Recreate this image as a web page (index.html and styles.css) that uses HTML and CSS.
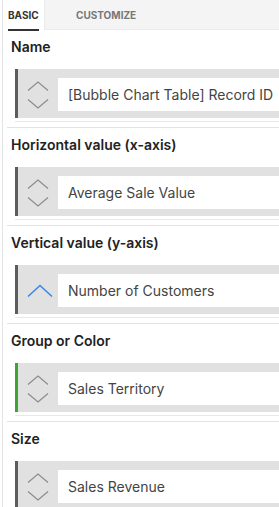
FILE: index.html
```html
<!DOCTYPE html>
<html>
<head>
  <title>Bubble chart fields</title>
  <link rel="stylesheet" href="styles.css">
</head>
<body>
  <div class="panel">
    <div class="tabs">
      <div class="tab active"><span>Basic</span></div>
      <div class="tab"><span>Customize</span></div>
    </div>

    <div class="section">
      <h4>Name</h4>
      <div class="field-wrap">
        <div class="field">
          <div class="sort">
            <svg width="22" height="28" viewBox="0 0 22 28"><polyline points="1,9.5 11,1 21,9.5"/><polyline points="1,18.5 11,27 21,18.5"/></svg>
          </div>
          <div class="value">[Bubble Chart Table] Record ID</div>
        </div>
      </div>
    </div>

    <div class="section">
      <h4>Horizontal value (x-axis)</h4>
      <div class="field-wrap">
        <div class="field">
          <div class="sort">
            <svg width="22" height="28" viewBox="0 0 22 28"><polyline points="1,9.5 11,1 21,9.5"/><polyline points="1,18.5 11,27 21,18.5"/></svg>
          </div>
          <div class="value">Average Sale Value</div>
        </div>
      </div>
    </div>

    <div class="section">
      <h4>Vertical value (y-axis)</h4>
      <div class="field-wrap">
        <div class="field">
          <div class="sort asc">
            <svg width="26" height="14" viewBox="0 0 26 14"><polyline points="1,12.5 13,1.5 25,12.5"/></svg>
          </div>
          <div class="value">Number of Customers</div>
        </div>
      </div>
    </div>

    <div class="section">
      <h4>Group or Color</h4>
      <div class="field-wrap">
        <div class="field green">
          <div class="sort">
            <svg width="22" height="28" viewBox="0 0 22 28"><polyline points="1,9.5 11,1 21,9.5"/><polyline points="1,18.5 11,27 21,18.5"/></svg>
          </div>
          <div class="value">Sales Territory</div>
        </div>
      </div>
    </div>

    <div class="section">
      <h4>Size</h4>
      <div class="field-wrap">
        <div class="field">
          <div class="sort">
            <svg width="22" height="28" viewBox="0 0 22 28"><polyline points="1,9.5 11,1 21,9.5"/><polyline points="1,18.5 11,27 21,18.5"/></svg>
          </div>
          <div class="value">Sales Revenue</div>
        </div>
      </div>
    </div>
  </div>
</body>
</html>
```

FILE: styles.css
```css
body{
  margin: 0;
  overflow: hidden;
  background: #fff;
  font-family: 'Inter', 'Roboto', sans-serif;
  color: #222;
}
.panel{
  min-height: 507px;
  margin-left: 2px;
  border-left: 1px solid #e3e3e3;
}
.tabs{
  display: flex;
  height: 30px;
}
.tab{
  display: flex;
  align-items: center;
  font-size: 10px;
  font-weight: 700;
  text-transform: uppercase;
}
.tab.active{
  width: 41px;
  padding-left: 5px;
  box-sizing: border-box;
  color: #333;
}
.tab.active span{
  display: block;
  height: 28px;
  line-height: 28px;
  border-bottom: 2px solid #333;
  margin-top: 2px;
}
.tab:not(.active){
  flex: 1;
  padding-left: 31px;
  background: #f4f4f4;
  border-left: 1px solid #ebebeb;
  border-bottom: 1px solid #ebebeb;
  height: 30px;
  box-sizing: border-box;
  color: #777;
}
.section{
  margin-left: 4px;
  padding: 8px 0 5px 4px;
  border-bottom: 1px solid #e3e3e3;
}
.section h4{
  margin: 0 0 14px;
  font-size: 14px;
  line-height: 17px;
  font-weight: 600;
  color: #222;
}
.field-wrap{
  margin-left: 4px;
  padding-bottom: 3px;
  border-bottom: 1px solid #e8e8e8;
}
.field{
  display: flex;
  align-items: center;
  height: 49px;
  box-sizing: border-box;
  padding: 9px 0 7px;
  background: #e1e1e1;
  border-left: 3px solid #5c5c5c;
}
.field.green{
  border-left-color: #3da535;
}
.sort{
  width: 40px;
  display: flex;
  justify-content: center;
  align-items: center;
}
.sort svg{
  display: block;
  fill: none;
  stroke: #8c8c8c;
  stroke-width: 1.2;
}
.sort.asc svg{
  stroke: #3a86e8;
  stroke-width: 1.6;
  margin-left: 4px;
}
.value{
  flex: 1;
  height: 33px;
  line-height: 33px;
  padding-left: 10px;
  background: #fff;
  font-size: 14px;
  color: #444;
  white-space: nowrap;
  overflow: hidden;
}
```
